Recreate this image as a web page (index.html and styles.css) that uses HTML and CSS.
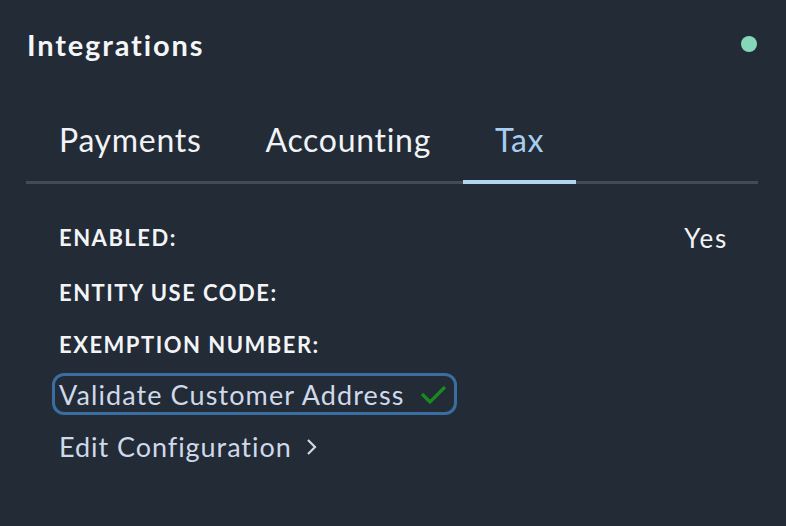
FILE: index.html
```html
<!DOCTYPE html>
<html>
<head>
<meta charset="utf-8">
<link rel="stylesheet" href="styles.css">
</head>
<body>
<div class="panel">
  <div class="header">
    <h1 class="title">Integrations</h1>
    <span class="status-dot"></span>
  </div>
  <div class="tabs">
    <div class="tab">Payments</div>
    <div class="tab">Accounting</div>
    <div class="tab active">Tax</div>
  </div>
  <div class="content">
    <div class="row first">
      <span class="label">ENABLED:</span>
      <span class="value">Yes</span>
    </div>
    <div class="row">
      <span class="label">ENTITY USE CODE:</span>
    </div>
    <div class="row">
      <span class="label">EXEMPTION NUMBER:</span>
    </div>
    <div class="validate">
      <span>Validate Customer Address</span>
      <svg class="check" width="28" height="22" viewBox="0 0 28 22"><path d="M2 10 L10 18 L25 3" fill="none" stroke="#1a8a1f" stroke-width="3.2"/></svg>
    </div>
    <div class="edit">
      <span>Edit Configuration</span>
      <svg class="chev" width="12" height="18" viewBox="0 0 12 18"><path d="M2 2 L9 9 L2 16" fill="none" stroke="#cfd8e8" stroke-width="2.2"/></svg>
    </div>
  </div>
</div>
</body>
</html>
```
FILE: styles.css
```css
html, body {
  margin: 0;
  padding: 0;
  background: #222b36;
  width: 786px;
  height: 526px;
  overflow: hidden;
  font-family: "Lato", "Noto Sans", sans-serif;
}
.panel {
  padding: 0 28px 0 26px;
}
.header {
  display: flex;
  align-items: center;
  justify-content: space-between;
  height: 88px;
}
.title {
  margin: 0 0 0 1px;
  font-size: 29px;
  font-weight: 700;
  letter-spacing: 1.85px;
  color: #f4f6f8;
}
.status-dot {
  width: 16px;
  height: 16px;
  border-radius: 50%;
  background: #84d8b9;
  margin-right: 1px;
}
.tabs {
  display: flex;
  border-bottom: 3px solid #434c56;
  margin-top: 13px;
}
.tab {
  padding: 19px 32px 21px 32px;
  font-size: 32px;
  letter-spacing: 0.7px;
  color: #f1f3f6;
  margin-bottom: -3px;
  border-bottom: 4px solid transparent;
}
.tab:first-child {
  padding-left: 33px;
}
.tab.active {
  color: #a9cdee;
  border-bottom-color: #b3d4f0;
}
.content {
  padding: 25px 32px 0 33px;
}
.row {
  display: flex;
  justify-content: space-between;
  align-items: center;
  height: 52px;
}
.row.first {
  height: 57px;
}
.label {
  font-size: 22px;
  font-weight: 700;
  color: #f2f4f7;
  letter-spacing: 1.5px;
}
.value {
  font-size: 26px;
  letter-spacing: 1.8px;
  margin-right: -2px;
  color: #f2f4f7;
}
.validate {
  display: inline-flex;
  align-items: center;
  gap: 15px;
  margin-left: -7px;
  margin-top: 3px;
  padding: 2px 6px 1px 4px;
  border: 3px solid #3a6ea0;
  border-radius: 12px;
  font-size: 27px;
  letter-spacing: 1.1px;
  color: #cfd9ea;
}
.edit {
  display: flex;
  align-items: center;
  gap: 14px;
  margin-top: 15px;
  font-size: 27px;
  letter-spacing: 0.95px;
  color: #cfd9ea;
}
```
